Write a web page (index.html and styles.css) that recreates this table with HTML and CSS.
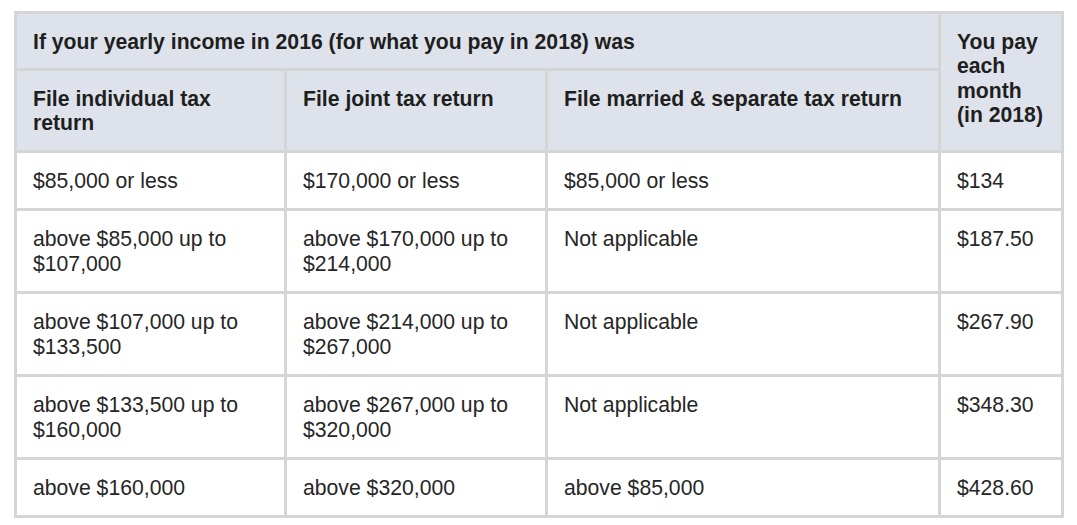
FILE: index.html
```html
<!DOCTYPE html>
<html>
<head>
<meta charset="utf-8">
<link rel="stylesheet" href="styles.css">
</head>
<body>
<table class="tax">
  <colgroup>
    <col class="c1"><col class="c2"><col class="c3"><col class="c4">
  </colgroup>
  <thead>
    <tr>
      <th colspan="3">If your yearly income in 2016 (for what you pay in 2018) was</th>
      <th rowspan="2">You pay each month (in 2018)</th>
    </tr>
    <tr>
      <th>File individual tax return</th>
      <th>File joint tax return</th>
      <th>File married &amp; separate tax return</th>
    </tr>
  </thead>
  <tbody>
    <tr><td>$85,000 or less</td><td>$170,000 or less</td><td>$85,000 or less</td><td>$134</td></tr>
    <tr><td>above $85,000 up to $107,000</td><td>above $170,000 up to $214,000</td><td>Not applicable</td><td>$187.50</td></tr>
    <tr><td>above $107,000 up to $133,500</td><td>above $214,000 up to $267,000</td><td>Not applicable</td><td>$267.90</td></tr>
    <tr><td>above $133,500 up to $160,000</td><td>above $267,000 up to $320,000</td><td>Not applicable</td><td>$348.30</td></tr>
    <tr><td>above $160,000</td><td>above $320,000</td><td>above $85,000</td><td>$428.60</td></tr>
  </tbody>
</table>
</body>
</html>
```
FILE: styles.css
```css
html, body {
  margin: 0;
  background: #ffffff;
}
body {
  padding: 11px 14px;
  font-family: "Liberation Sans", Arial, sans-serif;
  font-size: 21.2px;
  line-height: 24.5px;
  color: #262626;
}
.tax {
  width: 1047px;
  border-collapse: collapse;
  table-layout: fixed;
}
.c1 { width: 270px; }
.c2 { width: 261px; }
.c3 { width: 393px; }
.c4 { width: 123px; }
.tax th, .tax td {
  border: 3px solid #d5d5d5;
  padding: 16px 16px 15px;
  text-align: left;
  vertical-align: top;
}
.tax th {
  padding-top: 15.5px;
  padding-bottom: 14px;
  background: #dee3eb;
  font-weight: bold;
  color: #1f1f1f;
}
.tax td {
  background: #ffffff;
}
.tax tbody tr:last-child td {
  padding-bottom: 14px;
}
```
